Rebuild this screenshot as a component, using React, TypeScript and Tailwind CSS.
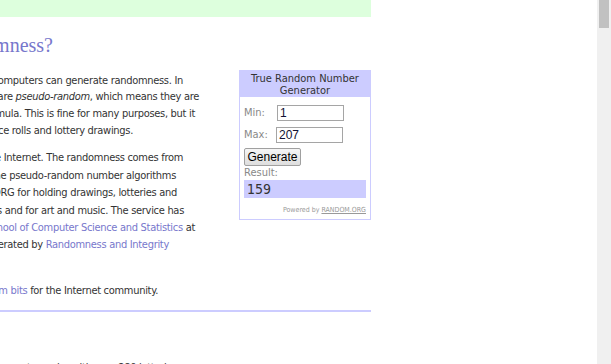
import type { ReactNode } from "react";

const body = "font-['DejaVu_Sans_Condensed','DejaVu_Sans',sans-serif] font-stretch-condensed";

function Line({ w, children }: { w: string; children: ReactNode }) {
  // each line ends where the reference wraps; whatever runs past the left edge is cut by the window
  return <div className={`flex justify-end whitespace-nowrap ${w}`}>{children}</div>;
}

function A({ children }: { children: ReactNode }) {
  return <a className="text-[#7777cc]">{children}</a>;
}

function Widget() {
  return (
    <div className={`w-[132px] border border-[#ccccff] bg-white ${body}`}>
      <div className="bg-[#ccccff] pt-[2px] pb-[1px] text-center text-[11px] leading-[11.5px] text-[#333]">
        True Random Number
        <br />
        Generator
      </div>
      <div className="px-[4px] pt-[8px] pb-[4px]">
        <div className="flex items-center">
          <span className="w-[33px] text-[11px] text-[#888]">Min:</span>
          <div className="h-[16px] w-[67px] border border-[#a5a5a5] px-[2px] font-['Liberation_Sans',sans-serif] text-[12px] leading-[14px] text-[#111133]">
            1
          </div>
        </div>
        <div className="mt-[5px] flex items-center">
          <span className="w-[32px] text-[11px] text-[#888]">Max:</span>
          <div className="h-[16px] w-[67px] border border-[#a5a5a5] px-[2px] font-['Liberation_Sans',sans-serif] text-[12px] leading-[14px] text-[#111133]">
            207
          </div>
        </div>
        <button className="mt-[5px] h-[18px] w-[57px] rounded-[2px] border border-[#a0a0a0] bg-gradient-to-b from-[#f6f6f6] to-[#dedede] font-['Liberation_Sans',sans-serif] text-[12px] leading-[14px] text-black">
          Generate
        </button>
        <div className="text-[11px] leading-[12px] text-[#888]">Result:</div>
        <div className="mt-[1px] h-[18px] bg-[#ccccff] px-[3px] text-[14px] leading-[18px] text-[#333]">159</div>
        <div className="mt-[8px] text-right text-[7px] leading-[9px] text-[#999]">
          Powered by <span className="underline">RANDOM.ORG</span>
        </div>
      </div>
    </div>
  );
}

export default function App() {
  return (
    <div className="flex h-[364px] w-[611px] overflow-hidden bg-white">
      <div className="w-[597px] overflow-hidden">
        <div className={`w-[371px] text-[11px] text-[#333] ${body}`}>
          <div className="h-[17px] bg-[#ddffdd]" />

          <h2 className="mt-[16px] flex w-[53px] justify-end whitespace-nowrap font-['Liberation_Serif',serif] text-[20px] leading-[24px] text-[#7777cc]">
            What's this fuss about true randomness?
          </h2>

          <div className="mt-[13px] flex items-start">
            <div className="w-[230px] pt-[2.5px] tracking-[-0.3px]">
              <div className="leading-[16.7px]">
                <Line w="w-[183px]">Perhaps you have wondered how predictable machines like computers can generate randomness. In</Line>
                <Line w="w-[199px]">
                  <span>
                    reality, most random numbers used in computer programs are <i>pseudo-random</i>, which means they are
                  </span>
                </Line>
                <Line w="w-[195px]">generated in a predictable fashion using a mathematical formula. This is fine for many purposes, but it</Line>
                <Line w="w-[133px]">may not be random in the way you expect if you're used to dice rolls and lottery drawings.</Line>
              </div>

              <div className="mt-[10px] leading-[17.4px]">
                <Line w="w-[183px]">RANDOM.ORG offers true random numbers to anyone on the Internet. The randomness comes from</Line>
                <Line w="w-[176px]">atmospheric noise, which for many purposes is better than the pseudo-random number algorithms</Line>
                <Line w="w-[177px]">typically used in computer programs. People use RANDOM.ORG for holding drawings, lotteries and</Line>
                <Line w="w-[184px]">sweepstakes, to drive online games, for scientific applications and for art and music. The service has</Line>
                <Line w="w-[195px]">
                  <span>
                    existed since 1998 and was built by Dr Mads Haahr of the <A>School of Computer Science and Statistics</A> at
                  </span>
                </Line>
                <Line w="w-[169px]">
                  <span>
                    Trinity College, Dublin in Ireland. Today, RANDOM.ORG is operated by <A>Randomness and Integrity</A>
                  </span>
                </Line>
                <Line w="w-0">
                  <A>Services Ltd.</A>
                </Line>
              </div>

              <div className="mt-[11px] leading-[17.4px]">
                <Line w="w-[158px]">
                  <span>
                    As of today, RANDOM.ORG has generated 2.19 trillion <A>random bits</A> for the Internet community.
                  </span>
                </Line>
              </div>
            </div>

            <div className="ml-auto">
              <Widget />
            </div>
          </div>

          <div className="mt-[10px] h-[2px] bg-[#ccccff]" />

          <div className="mt-[47px] leading-[17.4px] tracking-[-0.3px]">
            <Line w="w-[177px]">RANDOM.ORG's Lottery Quick Pick is perhaps the Internet's most popular with over 280 lotteries</Line>
          </div>
        </div>
      </div>

      <div className="h-full w-[14px] bg-[#f0f0f0] pl-[2px]">
        <div className="h-[28px] w-[10px] bg-[#c1c1c1]" />
      </div>
    </div>
  );
}
